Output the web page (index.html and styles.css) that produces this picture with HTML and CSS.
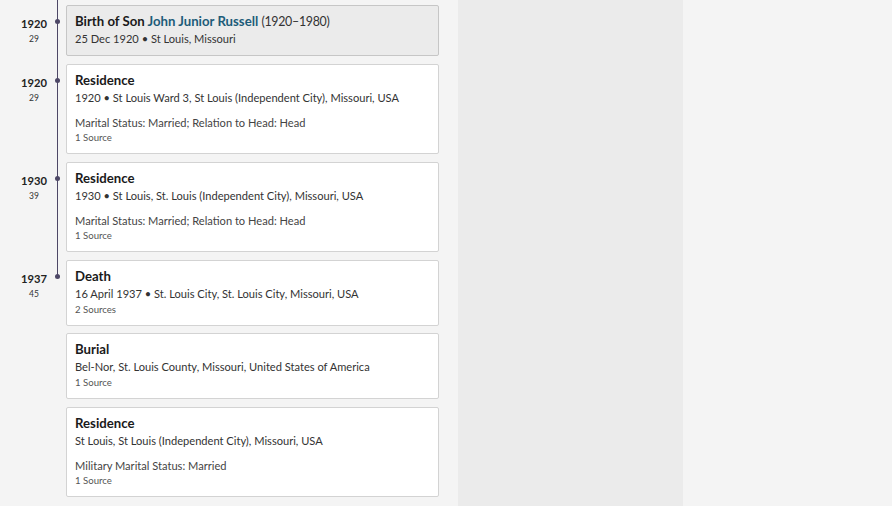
FILE: index.html
```html
<!DOCTYPE html>
<html lang="en">
<head>
    <meta charset="UTF-8">
    <meta name="viewport" content="width=device-width, initial-scale=1.0">
    <title>Life Events</title>
    <link rel="stylesheet" href="styles.css">
</head>
<body>
    <div class="page">
        <section class="timeline">
            <!-- dated events -->
            <div class="event">
                <div class="when"><span class="year">1920</span><span class="age">29</span></div>
                <div class="rail"><span class="dot"></span></div>
                <div class="card-wrap">
                    <div class="card family">
                        <h3 class="title">Birth of Son <a href="#">John Junior Russell</a> <span class="span">(1920–1980)</span></h3>
                        <p class="place">25 Dec 1920 • St Louis, Missouri</p>
                    </div>
                </div>
            </div>
            <div class="event">
                <div class="when"><span class="year">1920</span><span class="age">29</span></div>
                <div class="rail"><span class="dot"></span></div>
                <div class="card-wrap">
                    <div class="card">
                        <h3 class="title">Residence</h3>
                        <p class="place">1920 • St Louis Ward 3, St Louis (Independent City), Missouri, USA</p>
                        <p class="note">Marital Status: Married; Relation to Head: Head</p>
                        <p class="sources">1 Source</p>
                    </div>
                </div>
            </div>
            <div class="event">
                <div class="when"><span class="year">1930</span><span class="age">39</span></div>
                <div class="rail"><span class="dot"></span></div>
                <div class="card-wrap">
                    <div class="card">
                        <h3 class="title">Residence</h3>
                        <p class="place">1930 • St Louis, St. Louis (Independent City), Missouri, USA</p>
                        <p class="note">Marital Status: Married; Relation to Head: Head</p>
                        <p class="sources">1 Source</p>
                    </div>
                </div>
            </div>
            <div class="event last">
                <div class="when"><span class="year">1937</span><span class="age">45</span></div>
                <div class="rail"><span class="dot"></span></div>
                <div class="card-wrap">
                    <div class="card">
                        <h3 class="title">Death</h3>
                        <p class="place">16 April 1937 • St. Louis City, St. Louis City, Missouri, USA</p>
                        <p class="sources">2 Sources</p>
                    </div>
                </div>
            </div>

            <!-- undated events -->
            <div class="event undated">
                <div class="when"></div>
                <div class="rail"></div>
                <div class="card-wrap">
                    <div class="card">
                        <h3 class="title">Burial</h3>
                        <p class="place">Bel-Nor, St. Louis County, Missouri, United States of America</p>
                        <p class="sources">1 Source</p>
                    </div>
                </div>
            </div>
            <div class="event undated">
                <div class="when"></div>
                <div class="rail"></div>
                <div class="card-wrap">
                    <div class="card">
                        <h3 class="title">Residence</h3>
                        <p class="place">St Louis, St Louis (Independent City), Missouri, USA</p>
                        <p class="note">Military Marital Status: Married</p>
                        <p class="sources">1 Source</p>
                    </div>
                </div>
            </div>
        </section>
        <aside class="sidebar"></aside>
        <div class="rest"></div>
    </div>
</body>
</html>
```

FILE: styles.css
```css
/* General */
* {
    box-sizing: border-box;
}

body {
    margin: 0;
    font-family: Lato, "Open Sans", Arial, sans-serif;
    background-color: #f4f4f4;
    color: #333;
    overflow: hidden;
}

.page {
    display: flex;
    height: 506px;
}

/* Timeline */
.timeline {
    width: 458px;
    flex: none;
}

.event {
    display: flex;
    align-items: stretch;
}

.when {
    width: 48px;
    margin-left: 10px;
    display: flex;
    flex-direction: column;
    align-items: center;
    padding-top: 11px;
}

.year {
    font-size: 11.2px;
    font-weight: bold;
    color: #222;
    line-height: 16px;
}

.age {
    font-size: 8.5px;
    color: #333;
    line-height: 14px;
}

.rail {
    width: 1px;
    margin-left: -1px;
    display: flex;
    flex-direction: column;
    align-items: center;
    background: linear-gradient(#4d4766, #4d4766) center top / 1px 100% no-repeat;
}

.event:first-child .rail {
    margin-top: -5px;
    padding-top: 5px;
}

.event.last .rail {
    background-size: 1px 18px;
}

.undated .rail {
    background: none;
}

.dot {
    flex: none;
    width: 5px;
    height: 5px;
    margin-top: 14px;
    border-radius: 50%;
    background-color: #4d4766;
}

.card-wrap {
    margin-left: 8px;
    width: 373px;
    padding-bottom: 8px;
}

.event.last .card-wrap {
    padding-bottom: 7px;
}

.event:first-child .card-wrap {
    padding-top: 5px;
}

.event:first-child .when {
    padding-top: 16px;
}

.event:first-child .dot {
    margin-top: 19px;
}

.card {
    background-color: #fff;
    border: 1px solid #d3d3d3;
    border-radius: 2px;
    padding: 6px 8px 8px;
}

.card.family {
    background-color: #ebebeb;
    border-color: #c6c6c6;
    padding-bottom: 7px;
}

.title {
    margin: 0;
    font-size: 13.2px;
    line-height: 18px;
    font-weight: bold;
    color: #1a1a1a;
}

.title a {
    color: #1d5c79;
    text-decoration: none;
}

.title .span {
    font-weight: normal;
    font-size: 12.4px;
    line-height: 1;
    letter-spacing: -0.3px;
    color: #333;
}

.place {
    margin: 0;
    font-size: 11.1px;
    line-height: 18px;
    color: #333;
}

.note {
    margin: 8px 0 0;
    font-size: 11.1px;
    line-height: 16px;
    color: #444;
}

.sources {
    margin: 0;
    font-size: 9.6px;
    line-height: 14px;
    color: #555;
}

/* Columns on the right */
.sidebar {
    width: 225px;
    flex: none;
    background-color: #ebebeb;
}

.rest {
    flex: 1;
}
```
